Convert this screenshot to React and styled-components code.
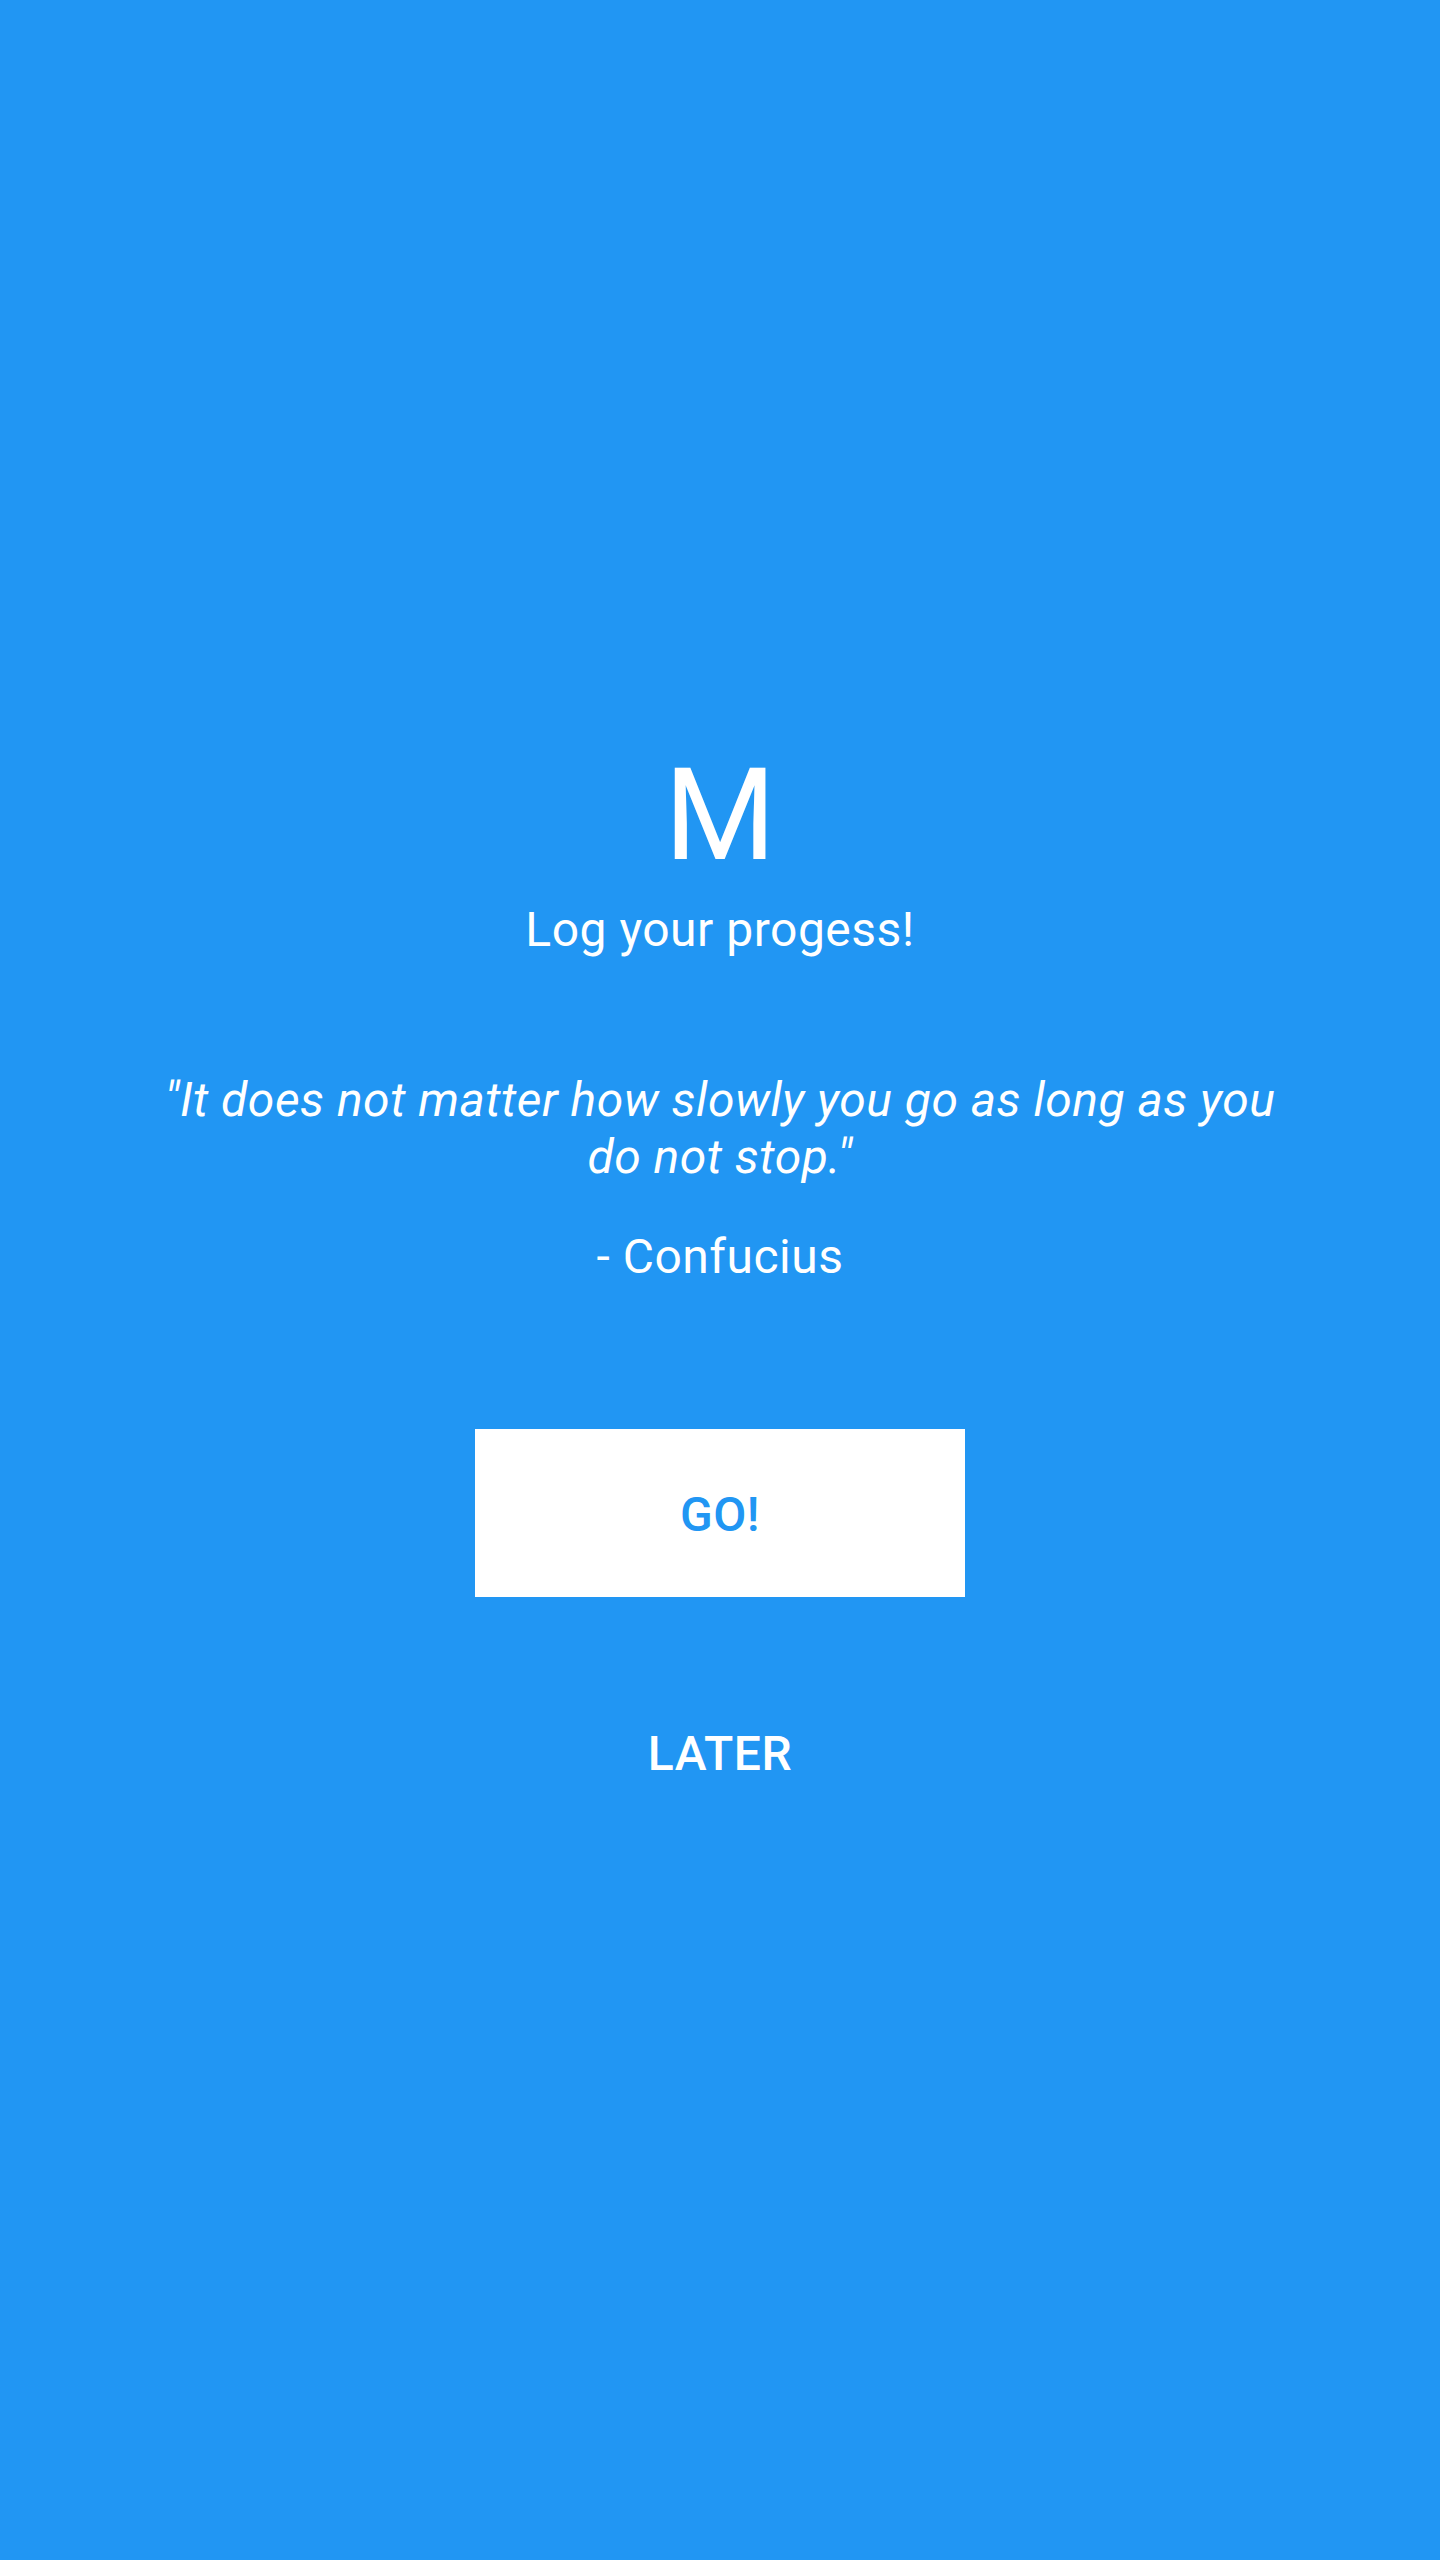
import React from "react"
import styled, { createGlobalStyle } from "styled-components"

const GlobalStyle = createGlobalStyle`
  html, body {
    margin: 0;
    padding: 0;
    background-color: #2196f3;
  }
  body {
    font-family: Roboto, "Noto Sans", "Liberation Sans", sans-serif;
    color: #ffffff;
  }
`

const Screen = styled.main`
  display: flex;
  flex-direction: column;
  align-items: center;
  min-height: 2560px;
  box-sizing: border-box;
  padding: 740px 140px 0;
  background-color: #2196f3;
`

const Logo = styled.div`
  font-size: 128px;
  line-height: 150px;
  font-weight: 400;
`

const Tagline = styled.div`
  margin-top: 12px;
  font-size: 48px;
  line-height: 56px;
  letter-spacing: 0.5px;
`

const Quote = styled.blockquote`
  margin: 113px 0 0;
  max-width: 1160px;
  font-size: 48px;
  line-height: 57px;
  letter-spacing: 0.5px;
  font-style: italic;
  text-align: center;
`

const Author = styled.div`
  margin-top: 44px;
  font-size: 48px;
  line-height: 56px;
  letter-spacing: 0.5px;
`

/** Primary white button with blue label */
const GoButton = styled.button`
  display: flex;
  align-items: center;
  justify-content: center;
  margin-top: 144px;
  width: 490px;
  height: 168px;
  padding: 3px 0 0;
  border: none;
  background-color: #ffffff;
  color: #2196f3;
  font-family: inherit;
  font-size: 48px;
  line-height: 56px;
  font-weight: 500;
  letter-spacing: 0.5px;
  text-transform: uppercase;
  cursor: pointer;
`

const LaterButton = styled.button`
  margin-top: 129px;
  padding: 0;
  border: none;
  background: transparent;
  color: #ffffff;
  font-family: inherit;
  font-size: 48px;
  line-height: 56px;
  font-weight: 500;
  letter-spacing: 0.5px;
  text-transform: uppercase;
  cursor: pointer;
`

export default function App() {
  return (
    <>
      <GlobalStyle />
      <Screen>
        <Logo>M</Logo>
        <Tagline>Log your progess!</Tagline>
        <Quote>
          "It does not matter how slowly you go as long as you do not stop."
        </Quote>
        <Author>- Confucius</Author>
        <GoButton>Go!</GoButton>
        <LaterButton>Later</LaterButton>
      </Screen>
    </>
  )
}
